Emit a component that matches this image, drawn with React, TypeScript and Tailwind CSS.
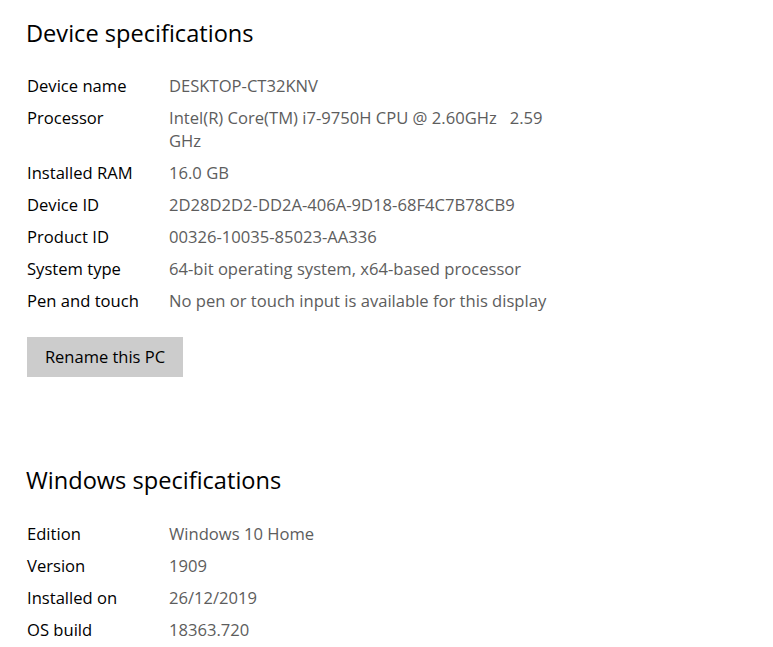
const deviceSpecs: { label: string; value: string }[] = [
  { label: 'Device name', value: 'DESKTOP-CT32KNV' },
  { label: 'Processor', value: 'Intel(R) Core(TM) i7-9750H CPU @ 2.60GHz   2.59\nGHz' },
  { label: 'Installed RAM', value: '16.0 GB' },
  { label: 'Device ID', value: '2D28D2D2-DD2A-406A-9D18-68F4C7B78CB9' },
  { label: 'Product ID', value: '00326-10035-85023-AA336' },
  { label: 'System type', value: '64-bit operating system, x64-based processor' },
  { label: 'Pen and touch', value: 'No pen or touch input is available for this display' },
];

const windowsSpecs = [
  { label: 'Edition', value: 'Windows 10 Home' },
  { label: 'Version', value: '1909' },
  { label: 'Installed on', value: '26/12/2019' },
  { label: 'OS build', value: '18363.720' },
];

const SpecRow = ({ label, value }: { label: string; value: string }) => (
  <div className="flex pt-[4px] pb-[5px] text-[16.6px] leading-[23px]">
    <div className="w-[142px] shrink-0 text-black">{label}</div>
    <div className="whitespace-pre text-[#5d5d5d]">{value}</div>
  </div>
);

const App = () => {
  return (
    <div
      className="min-h-screen bg-white pl-[27px] pt-[17px]"
      style={{ fontFamily: '"Segoe UI", "Open Sans", "Noto Sans", sans-serif' }}
    >
      <h2 className="-ml-[1px] text-[23.6px] leading-[32px] text-black">Device specifications</h2>
      <div className="mt-[21px]">
        {deviceSpecs.map((spec) => (
          <SpecRow key={spec.label} {...spec} />
        ))}
      </div>
      <button className="mt-[20px] h-[40px] w-[156px] bg-[#cccccc] text-[16.5px] text-black">
        Rename this PC
      </button>

      <h2 className="-ml-[1px] mt-[87px] text-[23.6px] leading-[32px] text-black">
        Windows specifications
      </h2>
      <div className="mt-[22px]">
        {windowsSpecs.map((spec) => (
          <SpecRow key={spec.label} {...spec} />
        ))}
      </div>
    </div>
  );
};

export default App;
